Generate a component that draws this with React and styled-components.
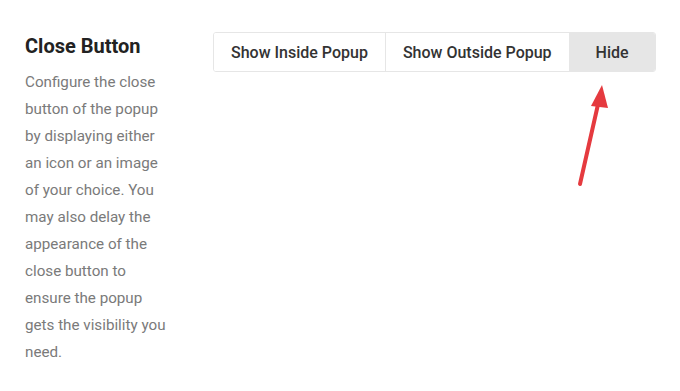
import styled, { createGlobalStyle } from "styled-components"

const Global = createGlobalStyle`
    html, body {
        margin: 0;
        padding: 0;
        background: #ffffff;
        font-family: Roboto, "Liberation Sans", sans-serif;
    }
`

const options = ["Show Inside Popup", "Show Outside Popup", "Hide"]

export default function App() {
    return (
        <>
            <Global />
            <Pagina>
                <Descricao>
                    <Titulo>Close Button</Titulo>
                    <Texto>
                        Configure the close button of the popup by displaying either an icon or an image of your choice. You may also delay the appearance of the close button to ensure the popup gets the visibility you need.
                    </Texto>
                </Descricao>
                <Controle>
                    <Grupo>
                        {options.map((o) => (
                            <Opcao key={o} ativo={o === "Hide"}>{o}</Opcao>
                        ))}
                    </Grupo>
                    <Seta width="40" height="110" viewBox="0 0 40 110">
                        <line x1="8" y1="104" x2="27" y2="20" stroke="#e53a3f" strokeWidth="4" strokeLinecap="round" />
                        <polygon points="30,5 19,26 36,28" fill="#e53a3f" />
                    </Seta>
                </Controle>
            </Pagina>
        </>
    )
}

const Pagina = styled('div')`
    display: flex;
    padding: 32px 0 0 25px;
    height: 391px;
    box-sizing: border-box;
`

const Descricao = styled('div')`
    width: 150px;
    margin-right: 38px;
`

const Titulo = styled('h2')`
    margin: 0;
    font-size: 20px;
    font-weight: 700;
    color: #222222;
    line-height: 28px;
`

const Texto = styled('p')`
    margin: 9px 0 0;
    font-size: 15.2px;
    line-height: 27px;
    color: #7a7a7a;
`

const Controle = styled('div')`
    position: relative;
`

const Grupo = styled('div')`
    display: flex;
    border: 1px solid #e6e6e6;
    border-radius: 3px;
    overflow: hidden;
    height: 38px;
`

const Opcao = styled('div')`
    display: flex;
    align-items: center;
    justify-content: center;
    padding: 0 17px;
    width: ${(p) => (p.ativo ? "86px" : "auto")};
    box-sizing: border-box;
    font-size: 16px;
    font-weight: 500;
    color: #333333;
    background: ${(p) => (p.ativo ? "#e6e6e6" : "#ffffff")};
    & + & {
        border-left: 1px solid #e6e6e6;
    }
`

const Seta = styled('svg')`
    position: absolute;
    left: 359px;
    top: 48px;
`
